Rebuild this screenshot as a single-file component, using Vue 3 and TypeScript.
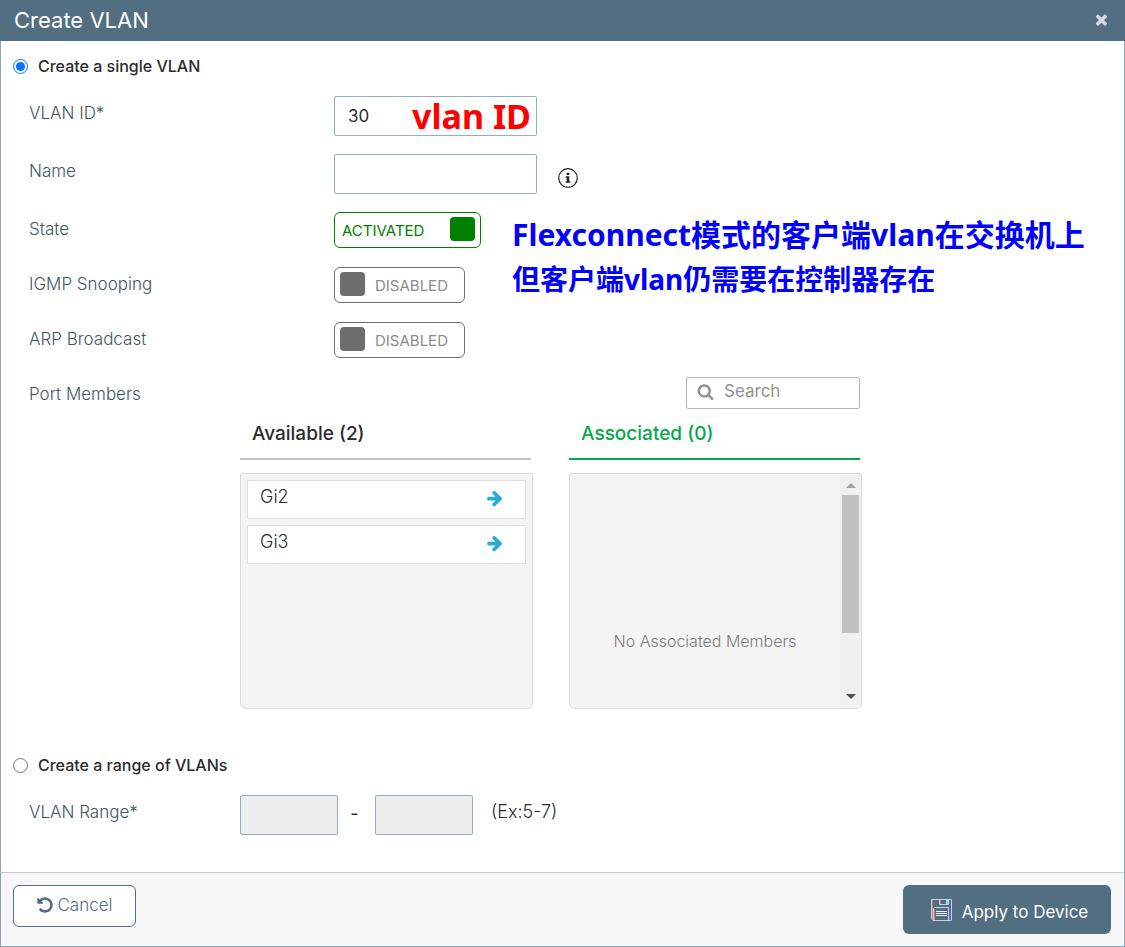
<script setup lang="ts">
import { computed, ref } from 'vue'

type Mode = 'single' | 'range'

const mode = ref<Mode>('single')
const vlanId = ref('30')
const vlanName = ref('')
const active = ref(true)
const igmp = ref(false)
const arp = ref(false)
const search = ref('')
const rangeFrom = ref('')
const rangeTo = ref('')
const available = ref<string[]>(['Gi2', 'Gi3'])
const associated = ref<string[]>([])

const shown = computed(() =>
  available.value.filter((p) => p.toLowerCase().includes(search.value.toLowerCase())),
)

function associate(port: string) {
  available.value = available.value.filter((p) => p !== port)
  associated.value.push(port)
}
</script>

<template>
  <div class="dialog" role="dialog" aria-labelledby="title">
    <header class="head">
      <h1 id="title">Create VLAN</h1>
      <button type="button" class="close" aria-label="Close">
        <svg viewBox="0 0 1792 1792" width="17" height="17"><path fill="currentColor" d="M1490 1322q0 40-28 68l-136 136q-28 28-68 28t-68-28l-294-294-294 294q-28 28-68 28t-68-28l-136-136q-28-28-28-68t28-68l294-294-294-294q-28-28-28-68t28-68l136-136q28-28 68-28t68 28l294 294 294-294q28-28 68-28t68 28l136 136q28 28 28 68t-28 68l-294 294 294 294q28 28 28 68z" /></svg>
      </button>
    </header>

    <main class="body">
      <label class="mode">
        <input v-model="mode" type="radio" name="mode" value="single" />
        <span>Create a single VLAN</span>
      </label>

      <div class="form">
        <div class="row">
          <label class="name" for="vlan-id">VLAN ID*</label>
          <div class="holder">
            <input id="vlan-id" v-model="vlanId" class="text" type="text" />
            <span class="note red">vlan ID</span>
          </div>
        </div>
        <div class="row">
          <label class="name" for="vlan-name">Name</label>
          <div class="holder">
            <input id="vlan-name" v-model="vlanName" class="text" type="text" />
          </div>
          <svg class="info" viewBox="0 0 20 20" width="20" height="20" role="img" aria-label="Info">
            <circle cx="10" cy="10" r="9.3" fill="none" stroke="#222" stroke-width="1.2" />
            <path fill="#222" d="M8.7 4.8h2.6v2.2H8.7zM7.7 8.2h3.6v5h1v1.5H7.7v-1.5h1V9.700h-1z" />
          </svg>
        </div>
        <div class="row">
          <span class="name">State</span>
          <label class="toggle" :class="{ on: active }">
            <input v-model="active" type="checkbox" aria-label="State" />
            <span>{{ active ? 'ACTIVATED' : 'DEACTIVATED' }}</span>
          </label>
          <p class="note blue">
            <span class="first">Flexconnect模式的客户端vlan在交换机上</span>
            <span class="second">但客户端vlan仍需要在控制器存在</span>
          </p>
        </div>
        <div class="row">
          <span class="name">IGMP Snooping</span>
          <label class="toggle" :class="{ on: igmp }">
            <input v-model="igmp" type="checkbox" aria-label="IGMP Snooping" />
            <span>{{ igmp ? 'ENABLED' : 'DISABLED' }}</span>
          </label>
        </div>
        <div class="row">
          <span class="name">ARP Broadcast</span>
          <label class="toggle" :class="{ on: arp }">
            <input v-model="arp" type="checkbox" aria-label="ARP Broadcast" />
            <span>{{ arp ? 'ENABLED' : 'DISABLED' }}</span>
          </label>
        </div>
        <div class="row ports">
          <span class="name">Port Members</span>
          <label class="search">
            <svg viewBox="0 0 1792 1792" width="17" height="17"><path fill="currentColor" d="M1216 832q0-185-131.500-316.500t-316.500-131.500-316.500 131.500-131.500 316.500 131.500 316.500 316.500 131.500 316.500-131.500 131.500-316.500zm512 832q0 52-38 90t-90 38q-54 0-90-38l-343-342q-179 124-399 124-143 0-273.500-55.500t-225-150-150-225-55.500-273.500 55.500-273.500 150-225 225-150 273.500-55.500 273.500 55.500 225 150 150 225 55.500 273.500q0 220-124 399l343 343q37 37 37 90z" /></svg>
            <input v-model="search" type="text" placeholder="Search" aria-label="Search" />
          </label>
        </div>
      </div>

      <div class="members">
        <section>
          <h2>Available ({{ available.length }})</h2>
          <ul class="box items">
            <li v-for="port in shown" :key="port">
              <span>{{ port }}</span>
              <button type="button" :aria-label="'Associate ' + port" @click="associate(port)">
                <svg viewBox="0 0 1792 1792" width="18" height="18"><path fill="currentColor" d="M1600 960q0 54-37 91l-651 651q-39 37-91 37-51 0-90-37l-75-75q-38-38-38-91t38-91l293-293h-704q-52 0-84.500-37.500t-32.500-90.500v-128q0-53 32.500-90.500t84.500-37.500h704l-293-294q-38-36-38-90t38-90l75-75q38-38 90-38 53 0 91 38l651 651q37 35 37 90z" /></svg>
              </button>
            </li>
          </ul>
        </section>
        <section>
          <h2 class="green">Associated ({{ associated.length }})</h2>
          <div class="box empty">
            <p v-if="!associated.length">No Associated Members</p>
            <ul v-else><li v-for="port in associated" :key="port">{{ port }}</li></ul>
            <div class="bar" aria-hidden="true">
              <i class="up"></i>
              <i class="thumb"></i>
              <i class="down"></i>
            </div>
          </div>
        </section>
      </div>

      <label class="mode">
        <input v-model="mode" type="radio" name="mode" value="range" />
        <span>Create a range of VLANs</span>
      </label>
      <div class="form">
        <div class="row range">
          <label class="name" for="range-from">VLAN Range*</label>
          <input id="range-from" v-model="rangeFrom" class="text" type="text" :disabled="mode !== 'range'" />
          <span class="dash">-</span>
          <input v-model="rangeTo" class="text" type="text" aria-label="VLAN Range end" :disabled="mode !== 'range'" />
          <span class="hint">(Ex:5-7)</span>
        </div>
      </div>
    </main>

    <footer class="foot">
      <button type="button" class="cancel">
        <svg viewBox="0 0 1792 1792" width="18" height="18"><path fill="currentColor" d="M1664 896q0 156-61 298t-164 245-245 164-298 61q-172 0-327-72.500t-264-204.500q-7-10-6.500-22.500t8.500-20.500l137-138q10-9 25-9 16 2 23 12 73 95 179 147t225 52q104 0 198.500-40.500t163.500-109.500 109.500-163.500 40.500-198.500-40.500-198.500-109.500-163.500-163.500-109.500-198.500-40.500q-98 0-188 35.500t-160 101.500l137 138q31 30 14 69-17 40-59 40h-448q-26 0-45-19t-19-45v-448q0-42 40-59 39-17 69 14l130 129q107-101 244.500-156.500t284.500-55.500q156 0 298 61t245 164 164 245 61 298z" /></svg>
        <span>Cancel</span>
      </button>
      <button type="button" class="apply">
        <svg viewBox="0 0 21 22" width="21" height="22" fill="none">
          <path stroke="#d9737f" d="M1.500 1V20" />
          <path stroke="#5468d8" d="M19.500 1V21" />
          <path stroke="#d9737f" d="M9.500 1V5" />
          <path stroke="#8fe3f0" stroke-width="2" d="M16 1V5" />
          <path stroke="#d9737f" d="M3.500 10V21" />
          <path stroke="#5468d8" d="M18.500 9V21" />
          <path stroke="#c9d3dc" d="M2 .5H20.500V21.500H2L.5 20V.5H2.500" />
          <path stroke="#c9d3dc" d="M8.500 1V5.500H17.500V1" />
          <path stroke="#c9d3dc" d="M2.500 21V9.500L3.500 8.500H17.500V21" />
          <path stroke="#e8edf2" d="M5 12.500H16M5 14.500H16M5 16.500H16" />
        </svg>
        <span>Apply to Device</span>
      </button>
    </footer>
  </div>
</template>

<style>
body {
  margin: 0;
}
</style>

<style scoped>
.dialog,
.dialog * {
  box-sizing: border-box;
}
.dialog {
  display: flex;
  flex-direction: column;
  min-height: 100vh;
  background: #fff;
  color: #2b2b2e;
  font-family: Inter, "Liberation Sans", "Noto Sans CJK SC", sans-serif;
  font-size: 17px;
}
input,
button {
  margin: 0;
  font: inherit;
  color: inherit;
}
button {
  padding: 0;
  border: 0;
  background: none;
  cursor: pointer;
}
svg {
  display: block;
  flex: none;
}
.head {
  display: flex;
  align-items: center;
  justify-content: space-between;
  height: 41px;
  padding: 0 15px 2px 14px;
  background: #526e81;
  color: #fff;
}
h1 {
  margin: 0;
  font-size: 22px;
  font-weight: 400;
  line-height: 38px;
}
.close {
  color: #d3dae0;
}
.body {
  flex: 1;
  padding: 15px 12px 37px;
  border: solid #8aa3bf;
  border-width: 0 1px;
}
.mode {
  display: flex;
  align-items: center;
  gap: 10px;
  width: fit-content;
  height: 20px;
  margin-bottom: 20px;
  font-size: 16px;
  font-weight: 500;
}
.mode input {
  width: 15px;
  height: 15px;
}
.form {
  display: flex;
  flex-direction: column;
  gap: 18px;
  padding-left: 16px;
}
.row {
  position: relative;
  display: flex;
  align-items: flex-start;
  min-height: 37px;
}
.name {
  flex: none;
  width: 305px;
  color: #3d5866;
  font-size: 17px;
  font-weight: 300;
  line-height: 34px;
}
.holder {
  position: relative;
  width: 203px;
}
.text {
  display: block;
  width: 100%;
  height: 40px;
  padding: 0 13px;
  border: 1px solid #8fb0c4;
  border-radius: 2px;
  background: #fff;
}
.text:disabled {
  background: #eee;
}
.info {
  margin: 14px 0 0 21px;
}
.toggle {
  display: flex;
  align-items: center;
  gap: 10px;
  height: 36px;
  padding: 0 16px 0 5px;
  border: 1px solid #6e6e6e;
  border-radius: 6px;
  color: #8c8c8c;
  font-size: 15px;
}
.toggle input {
  appearance: none;
  width: 25px;
  height: 24px;
  margin-bottom: 2px;
  border-radius: 4px;
  background: #6e6e6e;
}
.toggle.on {
  flex-direction: row-reverse;
  gap: 26px;
  padding: 0 5px 0 7px;
  border-color: green;
  color: green;
}
.toggle.on input {
  background: green;
}
.note {
  position: absolute;
  margin: 0;
  font-family: "Noto Sans", "Noto Sans CJK SC", sans-serif;
  font-weight: 700;
  white-space: nowrap;
  pointer-events: none;
}
.red {
  top: 0;
  right: 6px;
  color: red;
  font-size: 34px;
  line-height: 40px;
}
.blue {
  top: 0;
  left: 483px;
  display: flex;
  flex-direction: column;
  color: blue;
  line-height: 45px;
}
.first {
  font-size: 30px;
}
.second {
  font-size: 28px;
}
.ports {
  min-height: 32px;
  max-width: 831px;
  justify-content: space-between;
}
.ports .name {
  height: 32px;
}
.search {
  display: flex;
  align-items: center;
  gap: 10px;
  width: 174px;
  height: 32px;
  padding: 0 10px 4px;
  border: 1px solid #b5b5b5;
  border-radius: 2px;
  color: #929292;
}
.search input {
  min-width: 0;
  width: 100%;
  padding: 0;
  border: 0;
  background: none;
  font-size: 17px;
}
.search input::placeholder {
  color: #929292;
}
.members {
  display: grid;
  grid-template-columns: 1fr 1fr;
  gap: 36px;
  max-width: 849px;
  margin-bottom: 46px;
  padding-left: 227px;
}
h2 {
  margin: 0 2px 13px 0;
  padding: 0 12px;
  border-bottom: 2px solid #c3c3c3;
  font-size: 19px;
  font-weight: 500;
  line-height: 49px;
}
.green {
  border-color: #05a84b;
  color: #05a84b;
}
.box {
  height: 236px;
  margin: 0;
  border: 1px solid #dcdcdc;
  border-radius: 2px 2px 6px 6px;
  background: #f4f4f4;
}
.items {
  display: flex;
  flex-direction: column;
  gap: 6px;
  padding: 6px;
  list-style: none;
}
.items li {
  display: flex;
  justify-content: space-between;
  height: 39px;
  padding: 0 21px 4px 12px;
  border: 1px solid #dfdfdf;
  background: #fff;
  font-size: 18px;
  font-weight: 300;
  line-height: 31px;
}
.items button {
  color: #29a9d8;
}
.empty {
  display: flex;
}
.empty p {
  flex: 1;
  margin: 0;
  padding-top: 100px;
  color: #7d7d7d;
  font-size: 16px;
  font-weight: 300;
  line-height: 134px;
  text-align: center;
}
.empty ul {
  flex: 1;
}
.bar {
  display: flex;
  flex-direction: column;
  align-items: center;
  width: 21px;
  padding: 9px 0;
  background: #f0f0f0;
}
.thumb {
  width: 17px;
  height: 138px;
  margin: 7px 0 auto;
  background: #c1c1c1;
}
.up,
.down {
  border: solid transparent;
  border-width: 0 5px;
}
.up {
  border-bottom: 5px solid #a3a3a3;
}
.down {
  border-top: 5px solid #505050;
}
.range .name {
  width: 211px;
}
.range .text {
  width: 98px;
}
.dash {
  width: 37px;
  padding-right: 4px;
  font-size: 18px;
  line-height: 38px;
  text-align: center;
}
.hint {
  padding-left: 18px;
  font-size: 18px;
  font-weight: 300;
  line-height: 34px;
}
.foot {
  display: flex;
  align-items: flex-start;
  justify-content: space-between;
  height: 75px;
  padding: 12px 13px 0 12px;
  border: 1px solid #8aa3bf;
  border-top-color: #c4c8c6;
  background: #f7f7f7;
}
.cancel,
.apply {
  display: flex;
  align-items: center;
  justify-content: center;
  border-radius: 6px;
  font-size: 17px;
}
.cancel {
  gap: 3px;
  width: 123px;
  height: 42px;
  padding-bottom: 3px;
  border: 1px solid #526e81;
  background: #fff;
  color: #526e81;
  font-weight: 300;
}
.apply {
  gap: 10px;
  width: 208px;
  height: 49px;
  padding-left: 5px;
  background: #526e81;
  color: #fff;
}
.apply span {
  padding-top: 4px;
}
</style>
